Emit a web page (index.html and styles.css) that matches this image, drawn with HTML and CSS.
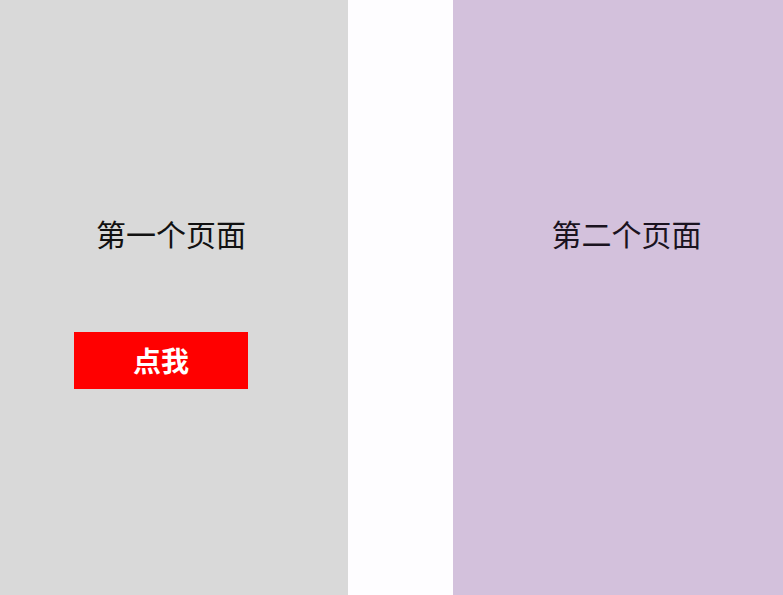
FILE: index.html
```html
<!DOCTYPE html>
<html lang="zh">
<head>
<meta charset="utf-8">
<link rel="stylesheet" href="styles.css">
</head>
<body>
<div class="track">
  <section class="page page-one">
    <h1 class="title">第一个页面</h1>
    <button class="btn">点我</button>
  </section>
  <div class="spacer"></div>
  <section class="page page-two">
    <h1 class="title">第二个页面</h1>
  </section>
</div>
</body>
</html>
```
FILE: styles.css
```css
html, body {
  margin: 0;
  padding: 0;
  width: 783px;
  height: 595px;
  overflow: hidden;
  background: #fefdff;
  font-family: "Noto Sans CJK SC", "Noto Sans", sans-serif;
}
.track {
  display: flex;
  height: 595px;
}
.page {
  flex: 0 0 348px;
  width: 348px;
  height: 595px;
  display: flex;
  flex-direction: column;
}
.page-one { background: #d9d9d9; }
.page-two { background: #d3c1dc; }
.spacer { flex: 0 0 105px; }
.title {
  margin: 213px 0 0;
  height: 40px;
  line-height: 40px;
  font-size: 30px;
  font-weight: 400;
  text-align: center;
  color: #111;
}
.page-one .title { padding-right: 6px; }
.page-two .title { color: #1a1320; padding-right: 1px; }
.btn {
  margin: 79px 0 0 74px;
  width: 174px;
  height: 57px;
  border: none;
  padding: 0;
  background: #ff0000;
  color: #fff;
  font-family: "Noto Sans CJK SC", sans-serif;
  font-size: 28px;
  font-weight: 700;
  line-height: 57px;
  text-align: center;
}
```
